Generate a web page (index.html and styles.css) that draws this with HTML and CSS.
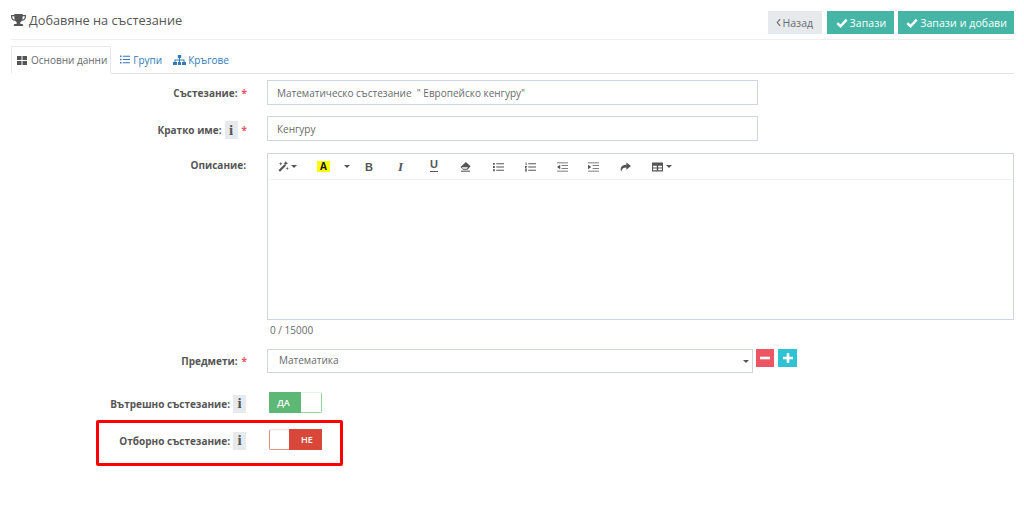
FILE: index.html
```html
<!DOCTYPE html>
<html lang="bg">
<head>
<meta charset="utf-8">
<title>Добавяне на състезание</title>
<link rel="stylesheet" href="styles.css">
</head>
<body>
<div class="page">
  <header class="head">
    <h1 class="title">
      <svg class="trophy" viewBox="0 0 16 14"><path fill="#555" d="M3.500 0h9v1.200H16v2.300c0 2-1.800 3.600-4.300 3.900-.5.700-1.100 1.200-1.700 1.500v1.900h1.600c.9 0 1.400.6 1.400 1.400v.8H3v-.8c0-.8.500-1.400 1.400-1.400H6V8.900c-.6-.3-1.200-.8-1.700-1.500C1.800 7.100 0 5.500 0 3.500V1.200h3.500V0zM1.300 2.500v1c0 1.200 1 2.200 2.500 2.600-.2-1-.3-2.200-.3-3.600H1.300zm13.400 0h-2.200c0 1.400-.1 2.600-.3 3.600 1.500-.4 2.500-1.400 2.500-2.600v-1z"/></svg>
      Добавяне на състезание
    </h1>
    <div class="actions">
      <button class="btn btn-back"><svg class="chev" viewBox="0 0 6 10"><path d="M5 1 1.500 5 5 9" fill="none" stroke="#676a6c" stroke-width="1.300"/></svg>Назад</button>
      <button class="btn btn-save btn-short"><svg class="check" viewBox="0 0 12 10"><path d="M1.300 5.200 4.500 8.200 10.700 1.600" fill="none" stroke="#fff" stroke-width="2.400"/></svg>Запази</button>
      <button class="btn btn-save btn-long"><svg class="check" viewBox="0 0 12 10"><path d="M1.300 5.200 4.500 8.200 10.700 1.600" fill="none" stroke="#fff" stroke-width="2.400"/></svg>Запази и добави</button>
    </div>
  </header>

  <nav class="tabs">
    <a class="tab active">
      <svg class="tab-ico" viewBox="0 0 10 9"><path fill="#555" d="M0 0h4.500v4H0zM5.500 0H10v4H5.500zM0 5h4.500v4H0zM5.500 5H10v4H5.500z"/></svg>Основни данни
    </a>
    <a class="tab">
      <svg class="tab-ico" viewBox="0 0 10 9"><path fill="#337ab7" d="M0 .5h1.500v1.500H0zM0 3.700h1.500v1.500H0zM0 7h1.500v1.500H0zM2.800 .7H10v1H2.800zM2.800 4H10v1H2.800zM2.800 7.300H10v1H2.800z"/></svg>Групи
    </a>
    <a class="tab">
      <svg class="tab-ico wide" viewBox="0 0 13 10"><path fill="#337ab7" d="M4.800 0h3.400v3H7v1.500h4.500V7h1.500v3H9V7h1.500V5.500h-3.500V7h1v3H5V7h1V5.500H2.500V7H4v3H0V7h1.500V4.500H6V3H4.800z"/></svg>Кръгове
    </a>
  </nav>

  <form class="form">
    <div class="row row-name">
      <label class="label">Състезание: <span class="req">*</span></label>
      <div class="field input">Математическо състезание &nbsp;" Европейско кенгуру"</div>
    </div>
    <div class="row row-short">
      <label class="label label-info">Кратко име: <span class="info">i</span> <span class="req">*</span></label>
      <div class="field input">Кенгуру</div>
    </div>
    <div class="row row-desc">
      <label class="label label-top">Описание:</label>
      <div class="editor-wrap">
        <div class="editor">
          <div class="toolbar">
            <svg class="tb t-wand" viewBox="0 0 12 12"><path fill="#555" d="M.5 10 7 3.500l1.700 1.700L2.200 11.700zM8.500 0l.8 1.700 1.700.8-1.700.8-.8 1.700-.8-1.700L6 2.500l1.700-.8zM3 1l.6 1.400L5 3l-1.400.6L3 5l-.6-1.400L1 3l1.400-.6zM10 6l.5 1.500 1.500.5-1.500.5-.5 1.500-.5-1.500L8 8l1.500-.5z"/></svg>
            <span class="caret c-wand"></span>
            <span class="tb-a">A</span>
            <span class="caret c-color"></span>
            <span class="tb-t t-b">B</span>
            <span class="tb-t t-i">I</span>
            <span class="tb-t t-u">U</span>
            <svg class="tb t-erase" viewBox="0 0 12 11"><path fill="#555" d="M6.500 0l5 4.800-3.200 3.700H3.500L.5 5.500z"/><path fill="#fff" d="M3.200 7.300h4.400l1.200-1.500H2z"/><path fill="#555" d="M1 9.500h10v1.200H1z"/></svg>
            <svg class="tb t-ul" viewBox="0 0 12 10"><path fill="#555" d="M0 .5h2v2H0zM0 4h2v2H0zM0 7.500h2v2H0zM3.500 1H12v1H3.500zM3.500 4.500H12v1H3.500zM3.500 8H12v1H3.500z"/></svg>
            <svg class="tb t-ol" viewBox="0 0 12 10"><path fill="#555" d="M.7 0h1v3H.7zM0 4h2v1H1v.5h1v1H0zM0 7.500h2v2.500H0v-.7h1v-.3H0zM3.500 1H12v1H3.500zM3.500 4.500H12v1H3.500zM3.500 8H12v1H3.500z"/></svg>
            <svg class="tb t-out" viewBox="0 0 12 10"><path fill="#555" d="M0 0h12v1H0zM5 3h7v1H5zM5 6h7v1H5zM0 9h12v1H0zM3.500 2.500v5L0 5z"/></svg>
            <svg class="tb t-in" viewBox="0 0 12 10"><path fill="#555" d="M0 0h12v1H0zM5 3h7v1H5zM5 6h7v1H5zM0 9h12v1H0zM0 2.500v5L3.500 5z"/></svg>
            <svg class="tb t-redo" viewBox="0 0 12 10"><path fill="#555" d="M7 0l5 4-5 4V5.500C4 5.500 2 6.500 1.500 10 0 7 .5 2.800 7 2.500z"/></svg>
            <svg class="tb t-table" viewBox="0 0 12 10"><path fill="#555" d="M0 0h12v10H0zM1.200 3.500v2h4v-2zm5.600 0v2h4v-2zM1.200 6.500v2h4v-2zm5.600 0v2h4v-2z"/></svg>
            <span class="caret c-table"></span>
          </div>
        </div>
        <div class="counter">0 / 15000</div>
      </div>
    </div>
    <div class="row row-subj">
      <label class="label">Предмети: <span class="req">*</span></label>
      <div class="subj">
        <div class="field select">Математика<span class="caret sel-caret"></span></div>
        <button type="button" class="sq sq-minus"><svg viewBox="0 0 10 10"><path fill="#fff" d="M0 3.700h10v2.600H0z"/></svg></button>
        <button type="button" class="sq sq-plus"><svg viewBox="0 0 10 10"><path fill="#fff" d="M3.700 0h2.600v3.700H10v2.600H6.300V10H3.700V6.300H0V3.700h3.700z"/></svg></button>
      </div>
    </div>
    <div class="row row-in">
      <label class="label label-low">Вътрешно състезание: <span class="info">i</span></label>
      <div class="toggle on"><span class="tog-fill">ДА</span><span class="tog-knob"></span></div>
    </div>
    <div class="row row-team">
      <label class="label label-low">Отборно състезание: <span class="info">i</span></label>
      <div class="toggle off"><span class="tog-knob"></span><span class="tog-fill">НЕ</span></div>
    </div>
  </form>
  <div class="highlight"></div>
</div>
</body>
</html>
```
FILE: styles.css
```css
* { box-sizing: border-box; }
html, body { margin: 0; padding: 0; background: #fff; }
body { font-family: "Open Sans", sans-serif; font-size: 10px; color: #676a6c; overflow: hidden; }
.page { position: relative; width: 1024px; height: 518px; padding: 0 10px 0 11px; }

.head { display: flex; justify-content: space-between; align-items: flex-start; height: 40px; padding-top: 11px; border-bottom: 1px solid #eee; }
.title { display: flex; align-items: center; gap: 3px; margin: 0; font-size: 12.750px; font-weight: 400; line-height: 18px; color: #555; }
.trophy { width: 15px; height: 13px; }
.actions { display: flex; gap: 4px; }
.btn { display: flex; align-items: center; height: 23px; padding: 0 8px; border: 0; font: 400 10.500px "Open Sans", sans-serif; }
.btn-back { width: 54px; padding: 0 0 0 8px; background: #e7eaec; color: #676a6c; margin-right: 1px; }
.btn-save { background: #45b5a5; color: #fff; letter-spacing: .1px; }
.btn-short { padding: 0 8px 0 9px; }
.btn-long { padding: 0 7px 0 8px; }
.chev { width: 5px; height: 9px; margin-right: 2px; }
.check { width: 12px; height: 10px; margin-right: 2px; }

.tabs { display: flex; height: 34px; padding-top: 6px; border-bottom: 1px solid #e2e2e2; }
.tab { display: flex; align-items: center; height: 27px; padding: 0 5px 0 6px; font-size: 10px; color: #337ab7; }
.tab.active { color: #676a6c; background: #fff; border: 1px solid #e7eaec; border-bottom: 1px solid #fff; height: 28px; padding: 0 3px 0 5px; margin-right: 3px; }
.tab-ico { width: 10px; height: 9px; margin-right: 4px; }
.tab-ico.wide { width: 13px; height: 10px; margin-right: 2px; }
.tab:nth-child(2) .tab-ico { margin-right: 3px; }

.row { display: grid; grid-template-columns: 235px 491px; column-gap: 21px; }
.label { display: flex; align-items: center; justify-content: flex-end; gap: 3px; font-weight: 700; font-size: 10px; color: #555; }
.label-top { align-items: flex-start; padding-top: 5px; }
.label-low { padding-top: 2px; }
.label-info { padding-top: 3px; }
.req { color: #ed5565; margin: 0 -1px 0 1px; }
.info { display: inline-flex; align-items: center; justify-content: center; width: 13px; height: 18px; background: #e7eaec; font-family: "Liberation Serif", serif; font-weight: 700; font-size: 15px; color: #555; }
.field { border: 1px solid #cfd4de; background: #fff; font-size: 10px; color: #676a6c; }
.input { display: flex; align-items: center; height: 25px; padding-left: 9px; }

.row-name { margin-top: 6px; }
.row-short { margin-top: 11px; }
.row-desc { margin-top: 12px; }
.row-subj { margin-top: 11px; }
.row-in { margin-top: 19px; }
.row-team { margin-top: 16px; }

.editor-wrap { width: 747px; }
.editor { height: 167px; border: 1px solid #cfd4de; }
.toolbar { position: relative; height: 26px; border-bottom: 1px solid #eef0f3; }
.tb { position: absolute; top: 8px; width: 11px; height: 10px; }
.caret { position: absolute; width: 0; height: 0; border-left: 3px solid transparent; border-right: 3px solid transparent; border-top: 3px solid #555; }
.c-wand { left: 23px; top: 11px; }
.t-wand { left: 10px; top: 7px; width: 11px; height: 11px; }
.tb-a { position: absolute; left: 49px; top: 7px; width: 13px; height: 11px; background: #ff0; color: #111; font-weight: 700; font-size: 10px; line-height: 11px; text-align: center; }
.c-color { left: 76px; top: 11px; }
.tb-t { position: absolute; top: 6px; font-size: 11px; line-height: 14px; font-family: "Liberation Serif", serif; font-weight: 700; color: #555; }
.t-b { left: 97px; font-family: "Liberation Sans", sans-serif; }
.t-i { left: 130px; font-style: italic; font-size: 13px; }
.t-u { left: 162px; font-family: "Liberation Sans", sans-serif; border-bottom: 1px solid #555; line-height: 11px; top: 5px; padding-bottom: 1px; }
.t-erase { left: 192px; top: 8px; }
.t-ul { left: 225px; }
.t-ol { left: 257px; }
.t-out { left: 289px; }
.t-in { left: 320px; }
.t-redo { left: 352px; }
.t-table { left: 384px; }
.c-table { left: 398px; top: 11px; }
.counter { margin-top: 3px; height: 15px; line-height: 15px; padding-left: 3px; font-size: 10px; color: #676a6c; }

.subj { display: flex; align-items: flex-start; gap: 3px; width: 600px; }
.select { position: relative; width: 486px; height: 24px; line-height: 21px; padding-left: 11px; flex: none; }
.sel-caret { right: 3px; top: 10px; }
.sq { display: flex; align-items: center; justify-content: center; width: 18px; height: 18px; border: 0; padding: 0; }
.sq svg { width: 10px; height: 10px; }
.sq-minus { background: #ed5565; }
.sq-plus { width: 19px; margin-left: 1px; background: #2fc2d5; }

.toggle { display: flex; width: 53px; height: 21px; margin-left: 2px; }
.tog-fill { display: flex; align-items: center; justify-content: center; width: 32px; color: #fff; font-size: 9px; font-weight: 600; }
.on .tog-fill { background: #5cb874; padding-right: 3px; }
.off .tog-fill { background: #d9473a; width: 33px; padding-left: 3px; }
.tog-knob { flex: 1; background: #fff; }
.on .tog-knob { border: 1px solid #8fd2a0; border-left: 0; border-top-color: #e4f4e8; border-radius: 0 2px 2px 0; }
.off .tog-knob { border: 1px solid #e39087; border-right: 0; border-top-color: #f6dcd9; border-radius: 2px 0 0 2px; }

.highlight { position: absolute; left: 96px; top: 420px; width: 247px; height: 46px; border: 3px solid #f00; border-radius: 2px; }
```
